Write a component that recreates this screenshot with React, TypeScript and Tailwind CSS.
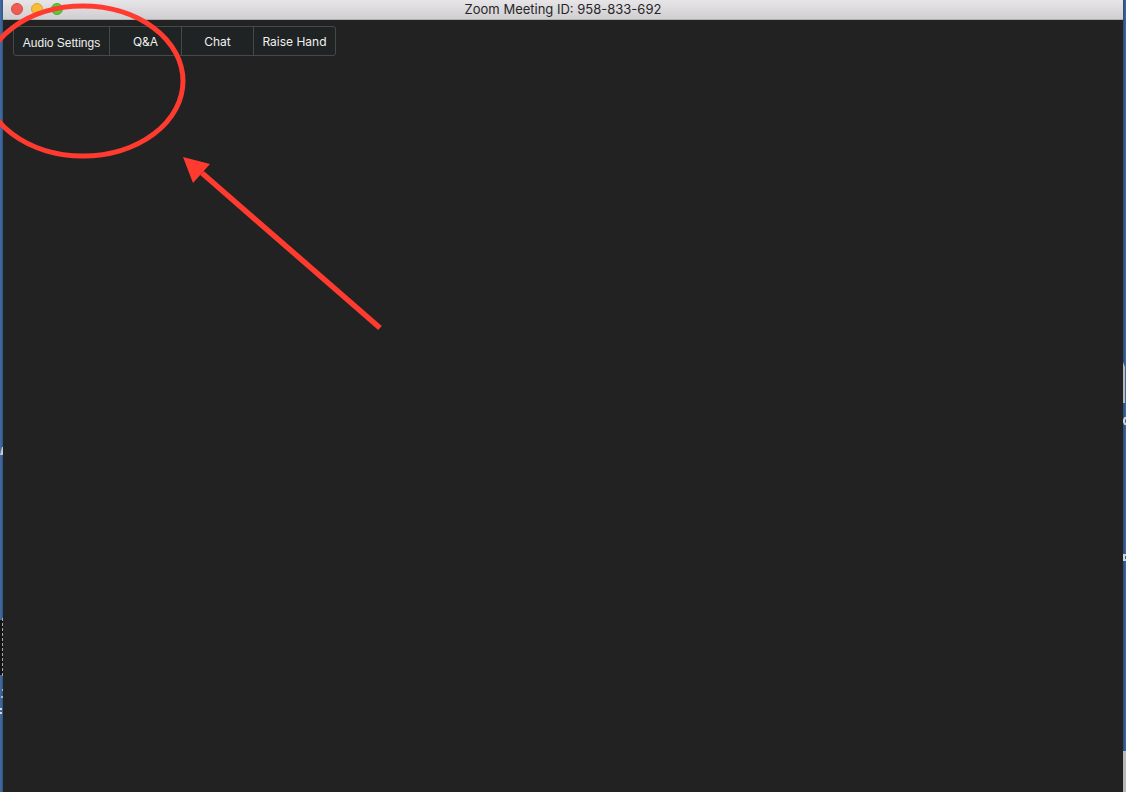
const actions = [
  { label: "Audio Settings", className: "w-[95px] pt-1 font-['Liberation_Sans',sans-serif]" },
  { label: "Q&A", className: "w-18 border-l pt-0.5 font-['Inter',sans-serif]" },
  { label: "Chat", className: "w-18 border-l pt-0.5 font-['Inter',sans-serif]" },
  { label: "Raise Hand", className: "w-[82px] border-l pt-0.5 font-['Inter',sans-serif]" },
];

const windowControls = [
  { label: "Close", className: "bg-[#ee5c54] border-[#d64c45]" },
  { label: "Minimize", className: "bg-[#f7bd35] border-[#dda32c]" },
  { label: "Zoom", className: "bg-[#5fc73b] border-[#4dad2e]" },
];

// Slivers of the desktop that show on either side of the window
function DesktopLeft() {
  return (
    <div className="relative w-[3px] shrink-0 overflow-hidden bg-linear-to-r from-[#426ea8] to-[#34557f]">
      <svg className="absolute top-[446px] left-0" width="3" height="12" aria-hidden="true">
        <path d="M0 9 L2 1 H3 V9 H1" fill="#c3c8ce" />
      </svg>
      <svg className="absolute top-[618px] left-0" width="3" height="100" aria-hidden="true">
        <rect y="2" width="3" height="55" fill="#151515" />
        <path d="M2.5 0 V58" stroke="#a9a9a9" strokeWidth="1" strokeDasharray="3 2" />
        <path d="M2 71 h1 v2 h-1 z M1 78 h2 v2 h-2 z" fill="#aeb6bf" />
        <path d="M0 90 h2 v2 h-2 z M0 94 h2 v2 h-2 z" fill="#d5d9de" />
      </svg>
    </div>
  );
}

function DesktopRight() {
  return (
    <div className="relative w-[3px] shrink-0 overflow-hidden bg-linear-to-r from-[#2b4a78] to-[#41699f]">
      <svg className="absolute top-[362px] left-0" width="3" height="42" aria-hidden="true">
        <path d="M0 0 L2 5 V41 H0 Z" fill="#b9b9b9" />
      </svg>
      <svg className="absolute top-[416px] left-0" width="3" height="10" aria-hidden="true">
        <path d="M3 2 H2 L1 4 V6 L2 8 H3" fill="none" stroke="#d2d5d8" strokeWidth="2" />
      </svg>
      <svg className="absolute top-[553px] left-0" width="3" height="9" aria-hidden="true">
        <path d="M3 2 H1 V7 H3" fill="none" stroke="#d2d5d8" strokeWidth="2" />
      </svg>
      <div className="absolute top-[751px] bottom-0 w-full bg-[#b8b8b8]" />
    </div>
  );
}

function TitleBar() {
  return (
    <header className="grid h-5 grid-cols-[1fr_auto_1fr] items-start border-b border-[#aeb0ae] bg-linear-to-b from-[#e7e5e7] to-[#d0ced0] px-2">
      <div className="flex gap-2 pt-[3px]">
        {windowControls.map((control) => (
          <button
            key={control.label}
            type="button"
            aria-label={control.label}
            className={`size-3 rounded-full border ${control.className}`}
          />
        ))}
      </div>
      <h1 className="font-['Inter',sans-serif] text-[13px] leading-[18px] text-[#262628]">
        Zoom Meeting ID: 958-833-692
      </h1>
    </header>
  );
}

// Red marker ellipse and arrow drawn over the window
function Annotation() {
  return (
    <svg
      className="pointer-events-none absolute top-0 left-0"
      width="400"
      height="340"
      aria-hidden="true"
    >
      <ellipse cx="83" cy="81" rx="100" ry="75" fill="none" stroke="#ff3b30" strokeWidth="5" />
      <path d="M202 173 L380 328" stroke="#ff3b30" strokeWidth="5.5" />
      <path d="M183 157 L210 164 L193 183 Z" fill="#ff3b30" />
    </svg>
  );
}

export default function App() {
  return (
    <div className="relative flex min-h-screen overflow-hidden">
      <DesktopLeft />
      <main className="flex flex-1 flex-col bg-[#222222]">
        <TitleBar />
        <div className="px-2.5 py-1.5">
          <div className="flex h-[30px] w-fit rounded-b-[3px] rounded-tr-[3px] border border-[#454a49] bg-[#1f2323]">
            {actions.map((action) => (
              <button
                key={action.label}
                type="button"
                className={`border-[#454a49] text-xs whitespace-nowrap text-[#f0f0f0] ${action.className}`}
              >
                {action.label}
              </button>
            ))}
          </div>
        </div>
      </main>
      <DesktopRight />
      <Annotation />
    </div>
  );
}
